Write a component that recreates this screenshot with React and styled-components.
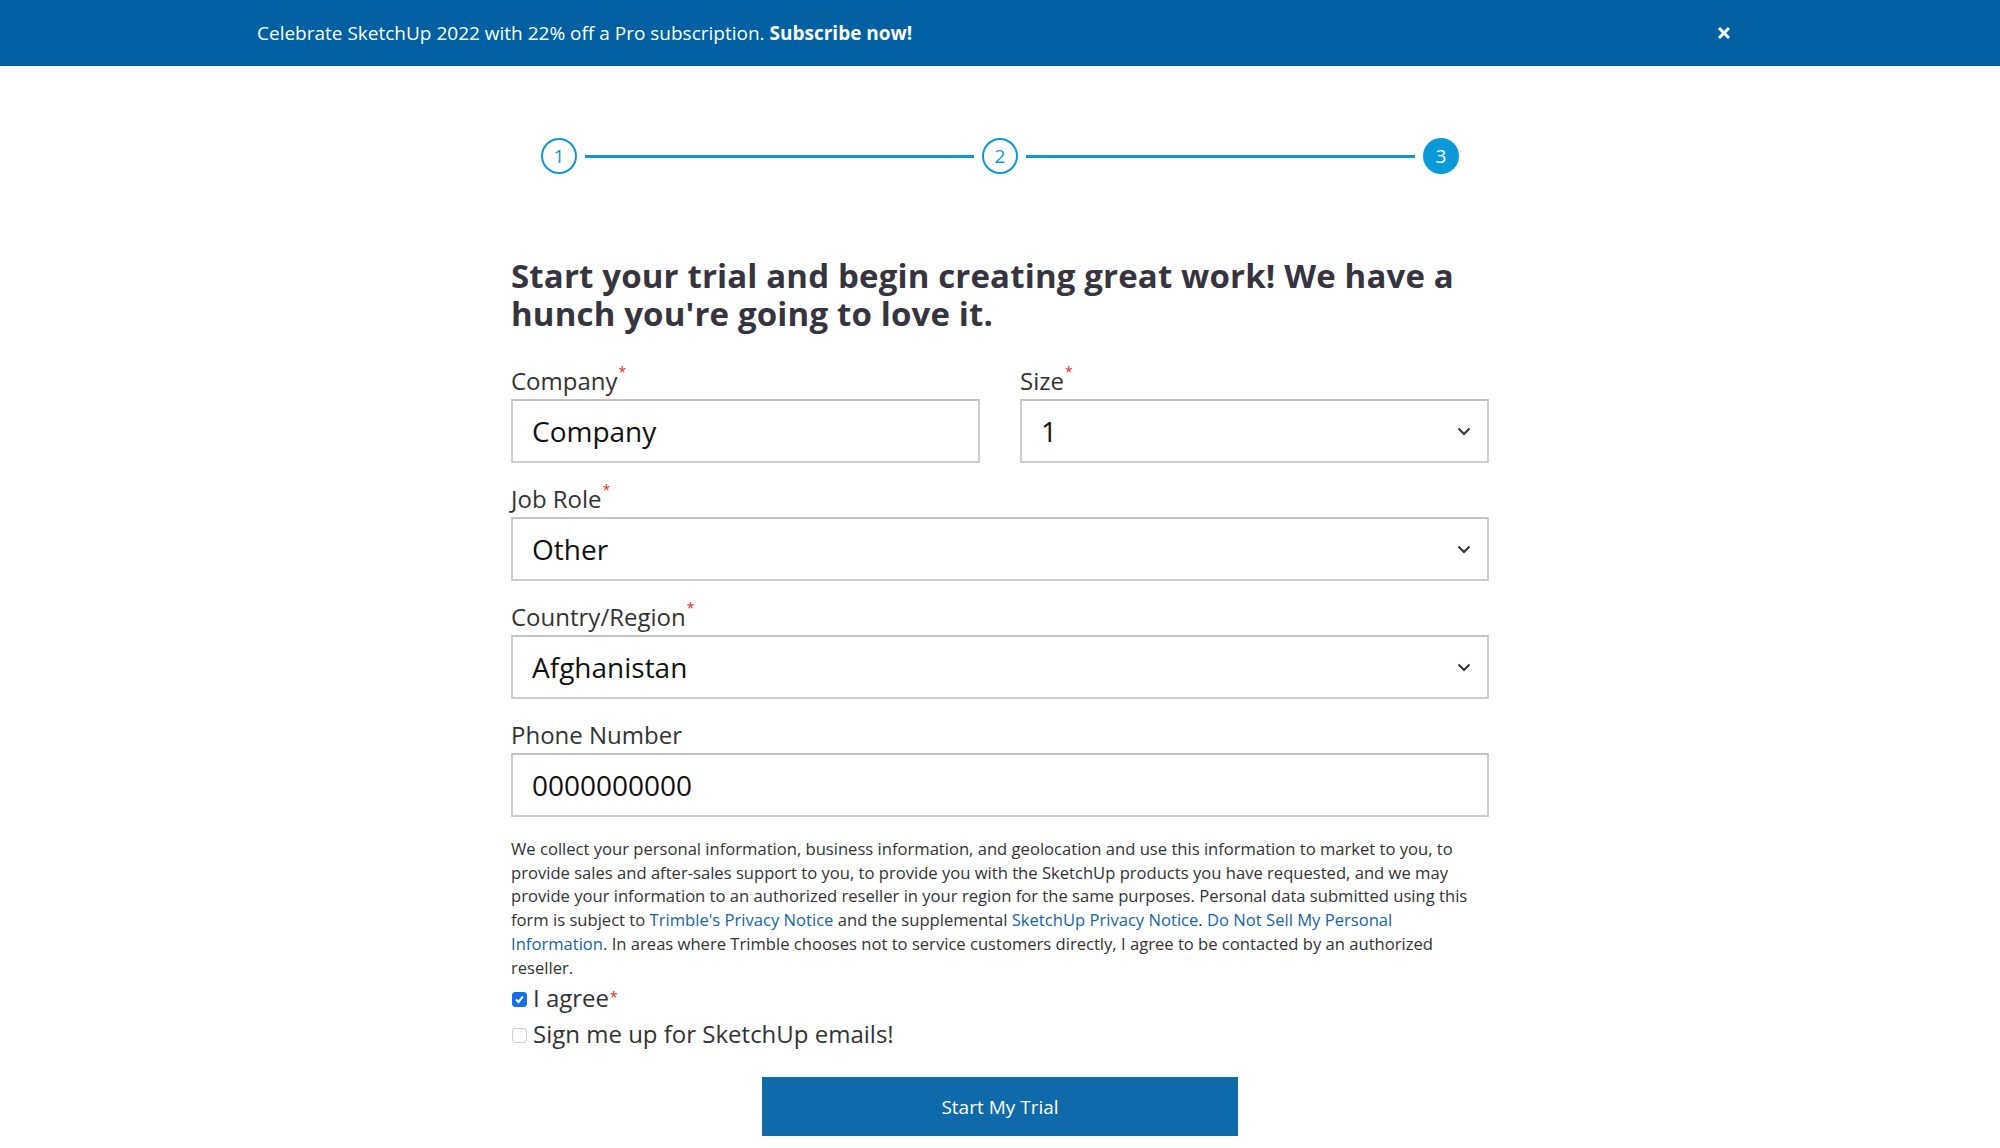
import styled, { createGlobalStyle } from 'styled-components';

const GlobalStyle = createGlobalStyle`
	* { box-sizing: border-box; }
	body {
		margin: 0;
		background: #fff;
		font-family: 'Open Sans', 'Liberation Sans', sans-serif;
		color: #333;
	}
`;

const Banner = styled.div`
	height: 66px;
	background-color: #0060a1;
	color: #fff;
	display: flex;
	align-items: center;
	justify-content: space-between;
	padding: 0 268px 0 257px;
	font-size: 19px;
`;

const BannerText = styled.span`
	b { font-weight: 700; }
`;

const Close = styled.button`
	border: none;
	background: none;
	padding: 0;
	width: 16px;
	height: 16px;
	display: flex;
	align-items: center;
	justify-content: center;
	cursor: pointer;
`;

const Stepper = styled.div`
	width: 918px;
	margin: 72px auto 0;
	display: flex;
	align-items: center;
`;

const Step = styled.div`
	width: 36px;
	height: 36px;
	flex: none;
	border-radius: 50%;
	border: 2px solid #0a9ad9;
	display: flex;
	align-items: center;
	justify-content: center;
	font-size: 19px;
	color: ${(props) => (props.$active ? '#fff' : '#0a9ad9')};
	background-color: ${(props) => (props.$active ? '#0a9ad9' : '#fff')};
`;

const Line = styled.div`
	flex: 1;
	height: 3px;
	margin: 0 8px;
	background-color: #0a9ad9;
`;

const Form = styled.form`
	width: 978px;
	margin: 83px auto 0;
`;

const Heading = styled.h1`
	margin: 0 0 32px;
	font-size: 33px;
	line-height: 38px;
	font-weight: 700;
	letter-spacing: 0.15px;
	color: #35343f;
`;

const Row = styled.div`
	display: grid;
	grid-template-columns: 1fr 1fr;
	gap: 40px;
`;

const Field = styled.div`
	margin-bottom: 20px;
`;

const Label = styled.label`
	display: block;
	font-size: 24px;
	line-height: 31px;
	margin-bottom: 3px;
	color: #333;
`;

const Req = styled.sup`
	color: #e8262a;
	font-size: 14px;
	vertical-align: top;
	line-height: 14px;
	margin-left: 1px;
`;

const Box = styled.div`
	height: 64px;
	border: 2px solid #cdcdcd;
	border-top-color: #c4c4c4;
	background: #fff;
	display: flex;
	align-items: center;
	justify-content: space-between;
	padding: 0 16px 0 19px;
	font-size: 28px;
	color: #111;
`;

const Legal = styled.p`
	margin: 10px 0 0;
	font-size: 16.6px;
	line-height: 23.7px;
	color: #333;

	a {
		color: #1565a5;
		text-decoration: none;
	}
`;

const Check = styled.div`
	display: flex;
	align-items: center;
	height: 36px;
	font-size: 24px;
	color: #333;
`;

const CheckBox = styled.span`
	width: 15px;
	height: 15px;
	margin: 4px 6px 0 1px;
	border-radius: 3px;
	display: flex;
	align-items: center;
	justify-content: center;
	border: 1px solid ${(props) => (props.$checked ? '#1a6fe0' : '#cfcfcf')};
	background-color: ${(props) => (props.$checked ? '#1a6fe0' : '#fff')};
`;

const Submit = styled.button`
	display: block;
	width: 476px;
	height: 59px;
	margin: 26px auto 0;
	border: none;
	background-color: #0e6aa8;
	color: #fff;
	font-family: inherit;
	font-size: 19px;
	cursor: pointer;
`;

function Chevron() {
	return (
		<svg width="14" height="9" viewBox="0 0 14 9">
			<polyline points="1.5,1.5 7,7 12.5,1.5" fill="none" stroke="#333" strokeWidth="2" />
		</svg>
	);
}

function App() {
	return (
		<>
			<GlobalStyle />
			<Banner>
				<BannerText>
					Celebrate SketchUp 2022 with 22% off a Pro subscription. <b>Subscribe now!</b>
				</BannerText>
				<Close aria-label="close">
					<svg width="14" height="14" viewBox="0 0 14 14">
						<path d="M2 2 L12 12 M12 2 L2 12" stroke="#fff" strokeWidth="3" />
					</svg>
				</Close>
			</Banner>

			<Stepper>
				<Step>1</Step>
				<Line />
				<Step>2</Step>
				<Line />
				<Step $active>3</Step>
			</Stepper>

			<Form onSubmit={(e) => e.preventDefault()}>
				<Heading>Start your trial and begin creating great work! We have a hunch you're going to love it.</Heading>

				<Row>
					<Field>
						<Label>Company<Req>*</Req></Label>
						<Box>Company</Box>
					</Field>
					<Field>
						<Label>Size<Req>*</Req></Label>
						<Box>1<Chevron /></Box>
					</Field>
				</Row>

				<Field>
					<Label>Job Role<Req>*</Req></Label>
					<Box>Other<Chevron /></Box>
				</Field>

				<Field>
					<Label>Country/Region<Req>*</Req></Label>
					<Box>Afghanistan<Chevron /></Box>
				</Field>

				<Field>
					<Label>Phone Number</Label>
					<Box>0000000000</Box>
				</Field>

				<Legal>
					We collect your personal information, business information, and geolocation and use this information to market to you, to provide sales and after-sales support to you, to provide you with the SketchUp products you have requested, and we may provide your information to an authorized reseller in your region for the same purposes. Personal data submitted using this form is subject to <a href="#">Trimble's Privacy Notice</a> and the supplemental <a href="#">SketchUp Privacy Notice</a>. <a href="#">Do Not Sell My Personal Information</a>. In areas where Trimble chooses not to service customers directly, I agree to be contacted by an authorized reseller.
				</Legal>

				<Check>
					<CheckBox $checked>
						<svg width="11" height="11" viewBox="0 0 11 11">
							<polyline points="2,5.5 4.5,8 9,2.5" fill="none" stroke="#fff" strokeWidth="2" />
						</svg>
					</CheckBox>
					I agree<Req>*</Req>
				</Check>
				<Check>
					<CheckBox />
					Sign me up for SketchUp emails!
				</Check>

				<Submit type="submit">Start My Trial</Submit>
			</Form>
		</>
	);
}

export default App;
